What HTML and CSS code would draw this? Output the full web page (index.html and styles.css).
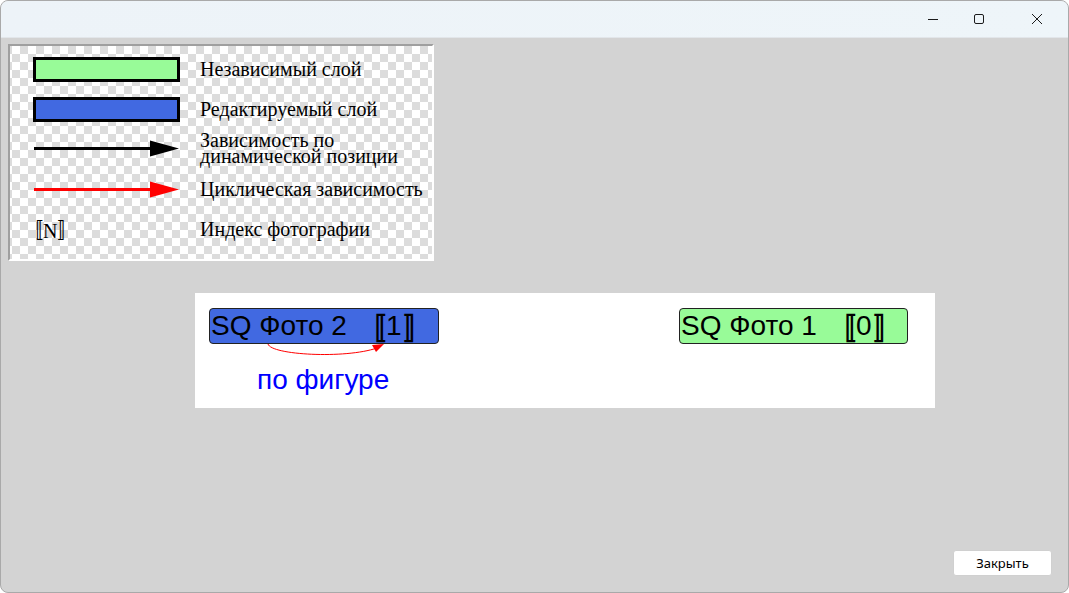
FILE: index.html
```html
<!DOCTYPE html>
<html lang="ru">
<head>
    <meta charset="UTF-8">
    <title>Legend</title>
    <link rel="stylesheet" href="styles.css">
</head>
<body>
    <div class="window">

        <!-- title bar -->
        <header class="titlebar">
            <span class="ctl">
                <svg width="12" height="12" viewBox="0 0 12 12"><path d="M1 6.5h10" stroke="#1b1b1b" stroke-width="1"/></svg>
            </span>
            <span class="ctl">
                <svg width="12" height="12" viewBox="0 0 12 12"><rect x="1.5" y="1.5" width="9" height="9" rx="1.5" fill="none" stroke="#1b1b1b" stroke-width="1"/></svg>
            </span>
            <span class="ctl">
                <svg width="12" height="12" viewBox="0 0 12 12"><path d="M1 1l10 10M11 1L1 11" stroke="#1b1b1b" stroke-width="1"/></svg>
            </span>
        </header>

        <main class="content">

            <!-- legend -->
            <section class="legend">
                <div class="swatch"><span class="box green"></span></div>
                <div class="label">Независимый слой</div>

                <div class="swatch"><span class="box blue"></span></div>
                <div class="label">Редактируемый слой</div>

                <div class="swatch">
                    <svg width="147" height="40" viewBox="0 0 147 40">
                        <path d="M1 19.5h118" stroke="#000" stroke-width="3"/>
                        <path d="M117 11.5L146 19.5L117 27.5Z" fill="#000"/>
                    </svg>
                </div>
                <div class="label two">Зависимость по<br>динамической позиции</div>

                <div class="swatch">
                    <svg width="147" height="40" viewBox="0 0 147 40">
                        <path d="M1 20.5h118" stroke="#ff0000" stroke-width="3"/>
                        <path d="M117 12.5L146 20.5L117 28.5Z" fill="#ff0000"/>
                    </svg>
                </div>
                <div class="label">Циклическая зависимость</div>

                <div class="swatch"><span class="index">〚N〛</span></div>
                <div class="label">Индекс фотографии</div>
            </section>

            <!-- diagram -->
            <section class="diagram">
                <div class="node blue-node" style="left: 14px; top: 15px;">SQ Фото 2<span class="idx"><span class="br">〚</span>1<span class="br">〛</span></span></div>
                <div class="node green-node" style="left: 484px; top: 15px;">SQ Фото 1<span class="idx"><span class="br">〚</span>0<span class="br">〛</span></span></div>

                <svg class="edge" width="740" height="115" viewBox="0 0 740 115">
                    <path d="M73 51 C 76 62, 150 66, 182 55" fill="none" stroke="#ff0000" stroke-width="1"/>
                    <path d="M189 51 L177 52 L181 59 Z" fill="#ff0000"/>
                </svg>
                <div class="edge-label">по фигуре</div>
            </section>

            <div class="actions">
                <button class="close-btn">Закрыть</button>
            </div>
        </main>
    </div>
</body>
</html>
```

FILE: styles.css
```css
* {
    padding: 0;
    margin: 0;
    box-sizing: border-box;
}

body {
    width: 1069px;
    height: 593px;
    overflow: hidden;
    background: #ffffff;
    font-family: "Liberation Sans", sans-serif;
}

.window {
    width: 1069px;
    height: 593px;
    border: 1px solid #a9a9a9;
    border-radius: 8px;
    overflow: hidden;
    display: flex;
    flex-direction: column;
    background: #d3d3d3;
}

.titlebar {
    height: 37px;
    background: linear-gradient(90deg, #edf3f8, #eef5f9);
    display: flex;
    justify-content: flex-end;
    align-items: center;
    gap: 34px;
    padding-right: 21px;
    border-bottom: 1px solid #e2e6ea;

    .ctl {
        width: 20px;
        height: 20px;
        display: flex;
        align-items: center;
        justify-content: center;
    }

    .ctl:first-child {
        margin-right: -8px;
    }

    .ctl:last-child {
        margin-left: 4px;
    }
}

.content {
    flex: 1;
    display: flex;
    flex-direction: column;
    padding: 6px 16px 16px 7px;
}

.legend {
    width: 426px;
    height: 217px;
    border: 2px solid;
    border-color: #9f9f9f #ffffff #ffffff #9f9f9f;
    background-color: #ffffff;
    background-image: conic-gradient(#dcdcdc 25%, #ffffff 0 50%, #dcdcdc 0 75%, #ffffff 0);
    background-size: 16px 16px;
    background-position: 2px 0;
    display: grid;
    grid-template-columns: 147px 1fr;
    grid-auto-rows: 40px;
    column-gap: 20px;
    padding: 3px 0 0 23px;
    font-family: "Liberation Serif", "Noto Sans CJK SC", serif;
    font-size: 20px;

    .swatch {
        display: flex;
        align-items: center;
    }

    .box {
        display: block;
        width: 147px;
        height: 25px;
        border: 3px solid #000;
    }

    .green {
        background: #98fb98;
    }

    .blue {
        background: #4169e1;
    }

    .index {
        font-size: 20px;
        margin-left: -10px;
    }

    .label {
        display: flex;
        align-items: center;
        color: #000;
        line-height: 16px;
    }

    .two {
        padding-bottom: 2px;
    }
}

.diagram {
    position: relative;
    width: 740px;
    height: 115px;
    margin: 32px 0 0 187px;
    background: #ffffff;

    .node {
        position: absolute;
        width: 230px;
        height: 36px;
        border: 1px solid #222;
        border-radius: 4px;
        font-family: "Liberation Sans", sans-serif;
        font-size: 28px;
        line-height: 34px;
        padding-left: 1px;
        white-space: pre;
        color: #000;
    }

    .blue-node {
        background: #4169e1;
    }

    .green-node {
        width: 229px;
        background: #98fb98;
    }

    .idx {
        margin-left: 23px;
    }

    .br {
        font-family: "Noto Sans CJK SC", sans-serif;
        font-size: 30px;
        font-weight: 700;
        display: inline-block;
        width: 16px;
        line-height: 34px;
        vertical-align: top;
        overflow: visible;
    }

    .br:first-child {
        text-indent: -14px;
    }

    .br:last-child {
        margin-left: 2px;
    }

    .edge {
        position: absolute;
        left: 0;
        top: 0;
    }

    .edge-label {
        position: absolute;
        left: 62px;
        top: 71px;
        font-size: 28px;
        color: #0000ff;
    }
}

.actions {
    margin-top: auto;
    display: flex;
    justify-content: flex-end;

    .close-btn {
        width: 99px;
        height: 26px;
        background: #ffffff;
        border: 1px solid #d0d0d0;
        border-radius: 3px;
        font-family: "Noto Sans", "Liberation Sans", sans-serif;
        font-size: 13px;
        color: #000;
    }
}
```
